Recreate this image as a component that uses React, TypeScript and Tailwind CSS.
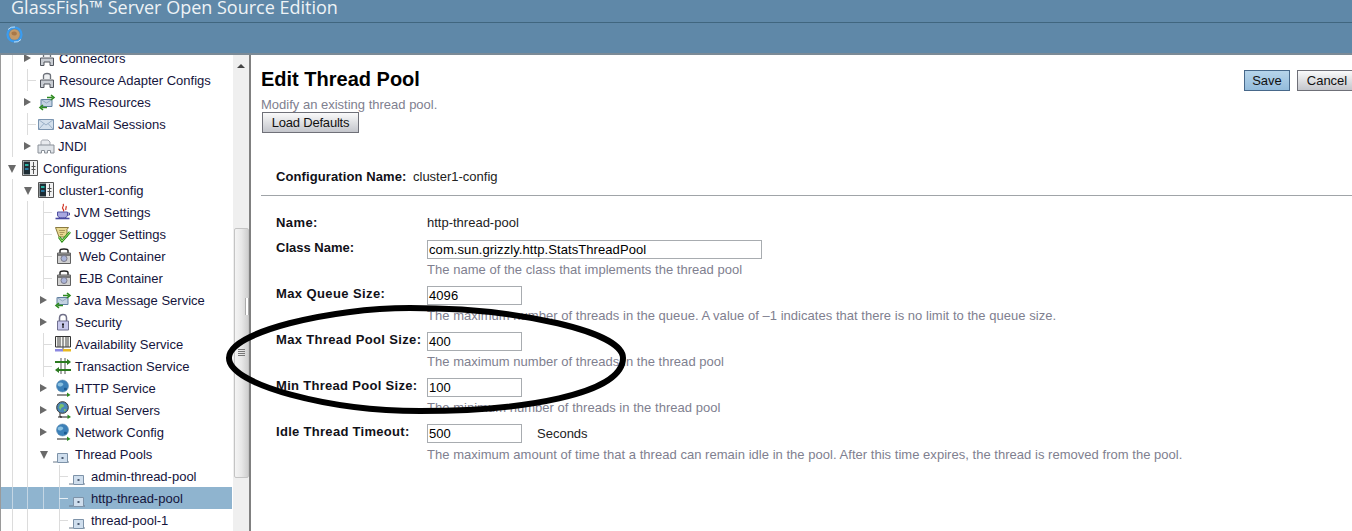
import React from "react";

type IconName = "connector" | "jms" | "mail" | "jndi" | "config" | "jvm" | "logger" | "container" | "lock" | "avail" | "tx" | "globe" | "vs" | "pool";

function Icon({ name }: { name: IconName }) {
  const c = "w-[18px] h-[18px] shrink-0 block";
  switch (name) {
    case "connector":
      return (
        <svg viewBox="0 0 18 18" className={c}>
          <path d="M5.500 8V4.500C5.500 3.500 7 2.500 9 2.500s3.500 1 3.500 2V8" fill="#eef0f2" stroke="#6c7078" strokeWidth="1.300" />
          <path d="M2.500 9h13v7.500h-3.500v-3.500H6v3.500H2.500z" fill="#c8ccd2" stroke="#50545c" strokeWidth="1" />
        </svg>
      );
    case "jms":
      return (
        <svg viewBox="0 0 18 18" className={c}>
          <path d="M3 6.500h11v7H3z" fill="#c4d2e2" stroke="#6080a0" strokeWidth="1" />
          <path d="M3 6.500l5.500 3.500L14 6.500" fill="none" stroke="#8aa0b8" strokeWidth=".8" />
          <path d="M9 4.500h5.500M13 2l3 2.500L13 7" fill="none" stroke="#2e8a20" strokeWidth="1.600" />
          <path d="M9 14.500H3.500M5 12l-3 2.500L5 17" fill="none" stroke="#2e8a20" strokeWidth="1.600" />
        </svg>
      );
    case "mail":
      return (
        <svg viewBox="0 0 18 18" className={c}>
          <path d="M1.500 4.500h15v10h-15z" fill="#d4e0ec" stroke="#7a94b0" strokeWidth="1" />
          <path d="M1.500 4.500L9 10l7.500-5.500M1.500 14.500L7 8.500M16.500 14.500L11 8.500" fill="none" stroke="#8aa2bc" strokeWidth=".8" />
        </svg>
      );
    case "jndi":
      return (
        <svg viewBox="0 0 18 18" className={c}>
          <path d="M4 8V5c0-1.200 1-2 2-2h5l2 2v3" fill="#e8eaee" stroke="#a4a8b0" strokeWidth="1" />
          <path d="M1 8h16v8h-3.500v-2.500h-3V16h-3v-2.500h-3V16H1z" fill="#dfe3e8" stroke="#8a9098" strokeWidth="1" />
        </svg>
      );
    case "config":
      return (
        <svg viewBox="0 0 18 18" className={c}>
          <path d="M1.500 1.500h15v15h-15z" fill="#f2f2f2" stroke="#555" strokeWidth="1" />
          <path d="M2.500 2.500h6.500v13H2.500z" fill="#1d2c34" />
          <path d="M4 5h3.500v2H4z" fill="#28b0a0" />
          <path d="M4 9h3.500v2H4z" fill="#2878a0" />
          <path d="M12.500 3v12M10.500 7.500h4M10.500 10.500h4" fill="none" stroke="#555" strokeWidth="1" />
        </svg>
      );
    case "jvm":
      return (
        <svg viewBox="0 0 18 18" className={c}>
          <path d="M9 1c2 2-2 3 0 5 .8 .8 1 1.500 .5 2.500M12 3c1 1.500-1 2.500 0 4" fill="none" stroke="#d03020" strokeWidth="1.200" />
          <path d="M3.500 9h10v3c0 2-2 3-5 3s-5-1-5-3z" fill="#a8a8e0" stroke="#5050a0" strokeWidth="1" />
          <path d="M13.500 10h2v2h-2" fill="none" stroke="#5050a0" strokeWidth="1" />
          <path d="M1.500 15.500h14" stroke="#4848a0" strokeWidth="1.600" />
        </svg>
      );
    case "logger":
      return (
        <svg viewBox="0 0 18 18" className={c}>
          <path d="M1.500 2.500h13l-1.500 2v7.500H5z" fill="#e8d890" stroke="#8a7a40" strokeWidth="1" />
          <path d="M5 5.500h6M5.500 7.500h5M6 9.500h3" stroke="#9a8a50" strokeWidth=".8" />
          <path d="M5 12l3 4 8-9" fill="none" stroke="#2a8a18" strokeWidth="2.600" />
          <path d="M5 12l3 4 8-9" fill="none" stroke="#a8e878" strokeWidth="1" />
        </svg>
      );
    case "container":
      return (
        <svg viewBox="0 0 18 18" className={c}>
          <path d="M5 6V3.500C5 2.500 6.500 2 9 2s4 .5 4 1.500V6" fill="none" stroke="#222" strokeWidth="1.400" />
          <path d="M2.500 6h13v10.500h-13z" fill="#d0d0d0" stroke="#606060" strokeWidth="1" />
          <path d="M3 6.500h12v2.500H3z" fill="#777" />
          <circle cx="9" cy="11.500" r="3" fill="#aab4d8" stroke="#7a7a8a" strokeWidth="1" />
        </svg>
      );
    case "lock":
      return (
        <svg viewBox="0 0 18 18" className={c}>
          <path d="M5.500 8V5c0-2 1.500-3.500 3.500-3.500S12.500 3 12.500 5v3" fill="none" stroke="#707088" strokeWidth="1.500" />
          <path d="M3.500 8h11v9h-11z" fill="#c8c8ec" stroke="#707090" strokeWidth="1" />
          <path d="M8 10.500h2v1l-.4 .8V15H8.400v-2.700L8 11.500z" fill="#111" />
        </svg>
      );
    case "avail":
      return (
        <svg viewBox="0 0 18 18" className={c}>
          <path d="M1.500 1.500h15v10.500h-15z" fill="#f6f6f2" stroke="#333" strokeWidth="1" />
          <path d="M4 2v10M6 2v10M9 2v10M12 2v10M14 2v10" stroke="#444" strokeWidth="1" />
          <path d="M9 12v2" stroke="#555" strokeWidth="1" />
          <path d="M1 14h8v2.500H1z" fill="#8c88e0" />
          <path d="M9 14h8v2.500H9z" fill="#e8b820" />
        </svg>
      );
    case "tx":
      return (
        <svg viewBox="0 0 18 18" className={c}>
          <path d="M7 1v16M11 1v16" stroke="#555" strokeWidth="1" />
          <path d="M1 5h13" stroke="#2c7a20" strokeWidth="2" />
          <path d="M13 2l4 3-4 3z" fill="#2c7a20" />
          <path d="M17 13H4" stroke="#2c7a20" strokeWidth="2" />
          <path d="M5 10l-4 3 4 3z" fill="#2c7a20" />
        </svg>
      );
    case "globe":
      return (
        <svg viewBox="0 0 18 18" className={c}>
          <circle cx="8.500" cy="7" r="6" fill="#3c80b8" stroke="#5a8ab0" strokeWidth=".6" />
          <path d="M4 4.500c2-1.500 4-1 5 0s-1 3-3 3-3-1.500-2-3z" fill="#8ac0e0" />
          <path d="M10 9c1.500-.5 3 0 3 1s-1.500 1.500-3 1z" fill="#1c5a90" />
          <path d="M3 16h11" stroke="#222" strokeWidth="1" />
          <path d="M13 13.500l3.500 2.500-3.500 2z" fill="#2c8a20" />
        </svg>
      );
    case "vs":
      return (
        <svg viewBox="0 0 18 18" className={c}>
          <circle cx="8.500" cy="6.500" r="5.800" fill="#4a88b8" stroke="#333" strokeWidth="1" />
          <path d="M6 3.500c2-1 4 0 4 1.500s-3 1-3 3-1.500 0-2-1.500z" fill="#78c070" />
          <path d="M10 8c1.500 0 2.500 .5 2 1.500l-2 1z" fill="#78c070" />
          <path d="M6 12v4h8" fill="none" stroke="#222" strokeWidth="1" />
          <path d="M4 16h4" stroke="#222" strokeWidth="1" />
          <path d="M13.500 13.500l3.500 2.500-3.500 2z" fill="#2c8a20" />
        </svg>
      );
    case "pool":
      return (
        <svg viewBox="0 0 18 18" className={c}>
          <path d="M0 17h4M14 17h2" stroke="#6a7a8c" strokeWidth="1" />
          <path d="M4.500 8.500h10v9h-10z" fill="#cfdeed" stroke="#7d92a8" strokeWidth="1" />
          <path d="M8.500 12h2v2h-2z" fill="#4a5a70" />
        </svg>
      );
  }
}

type Node = {
  t: string;
  i: IconName;
  pad: string;
  gap: string;
  exp?: "open" | "closed";
  expX?: string;
  v: string[];
  stub?: string;
  sel?: boolean;
};

const L = "left-[11px]";
const M = "left-[26px]";
const N = "left-[42px]";
const P = "left-[58px]";

const nodes: Node[] = [
  { t: "Connectors", i: "connector", pad: "pl-[37px]", gap: "ml-[3px]", exp: "closed", expX: "left-[23px]", v: [L] },
  { t: "Resource Adapter Configs", i: "connector", pad: "pl-[37px]", gap: "ml-[3px]", v: [L, M], stub: "left-[26px]" },
  { t: "JMS Resources", i: "jms", pad: "pl-[37px]", gap: "ml-[3px]", exp: "closed", expX: "left-[23px]", v: [L] },
  { t: "JavaMail Sessions", i: "mail", pad: "pl-[36px]", gap: "ml-[3px]", v: [L, M], stub: "left-[26px]" },
  { t: "JNDI", i: "jndi", pad: "pl-[36px]", gap: "ml-[3px]", exp: "closed", expX: "left-[23px]", v: [L] },
  { t: "Configurations", i: "config", pad: "pl-[20px]", gap: "ml-[4px]", exp: "open", expX: "left-[7px]", v: [] },
  { t: "cluster1-config", i: "config", pad: "pl-[36px]", gap: "ml-[4px]", exp: "open", expX: "left-[23px]", v: [L] },
  { t: "JVM Settings", i: "jvm", pad: "pl-[53px]", gap: "ml-[2px]", v: [L, M, N], stub: "left-[42px]" },
  { t: "Logger Settings", i: "logger", pad: "pl-[53px]", gap: "ml-[3px]", v: [L, M, N], stub: "left-[42px]" },
  { t: "Web Container", i: "container", pad: "pl-[54px]", gap: "ml-[6px]", v: [L, M, N], stub: "left-[42px]" },
  { t: "EJB Container", i: "container", pad: "pl-[54px]", gap: "ml-[6px]", v: [L, M, N], stub: "left-[42px]" },
  { t: "Java Message Service", i: "jms", pad: "pl-[53px]", gap: "ml-[2px]", exp: "closed", expX: "left-[39px]", v: [L, M] },
  { t: "Security", i: "lock", pad: "pl-[53px]", gap: "ml-[3px]", exp: "closed", expX: "left-[39px]", v: [L, M] },
  { t: "Availability Service", i: "avail", pad: "pl-[53px]", gap: "ml-[3px]", v: [L, M, N], stub: "left-[42px]" },
  { t: "Transaction Service", i: "tx", pad: "pl-[53px]", gap: "ml-[3px]", v: [L, M, N], stub: "left-[42px]" },
  { t: "HTTP Service", i: "globe", pad: "pl-[53px]", gap: "ml-[3px]", exp: "closed", expX: "left-[39px]", v: [L, M] },
  { t: "Virtual Servers", i: "vs", pad: "pl-[53px]", gap: "ml-[3px]", exp: "closed", expX: "left-[39px]", v: [L, M] },
  { t: "Network Config", i: "globe", pad: "pl-[53px]", gap: "ml-[3px]", exp: "closed", expX: "left-[39px]", v: [L, M] },
  { t: "Thread Pools", i: "pool", pad: "pl-[52px]", gap: "ml-[4px]", exp: "open", expX: "left-[39px]", v: [L, M] },
  { t: "admin-thread-pool", i: "pool", pad: "pl-[68px]", gap: "ml-[4px]", v: [L, M, P], stub: "left-[58px]" },
  { t: "http-thread-pool", i: "pool", pad: "pl-[68px]", gap: "ml-[4px]", v: [L, M, N, P], stub: "left-[58px]", sel: true },
  { t: "thread-pool-1", i: "pool", pad: "pl-[68px]", gap: "ml-[4px]", v: [L, M, P], stub: "left-[58px]" },
];

function Row({ n }: { n: Node }) {
  return (
    <div className={`relative h-[22px] w-[231px] flex items-center ${n.pad} ${n.sel ? "bg-[#8fb4cf]" : ""}`}>
      {n.v.map((x) => (
        <span key={x} className={`absolute top-0 bottom-0 w-px ${x} ${n.sel ? "bg-[#c4d6e4]" : "bg-[#dcdcdc]"}`} />
      ))}
      {n.stub && <span className={`absolute top-[11px] h-px w-[9px] ${n.stub} ${n.sel ? "bg-[#e6eef4]" : "bg-[#dcdcdc]"}`} />}
      {n.exp === "closed" && (
        <span className={`absolute top-[7px] ${n.expX} w-0 h-0 border-y-[4px] border-y-transparent border-l-[7px] border-l-[#6a6a6a]`} />
      )}
      {n.exp === "open" && (
        <span className={`absolute top-[8px] ${n.expX} w-0 h-0 border-x-[4px] border-x-transparent border-t-[8px] border-t-[#6a6a6a]`} />
      )}
      <Icon name={n.i} />
      <span className={`${n.gap} pt-[2px] whitespace-nowrap text-[13px] text-[#14143c]`}>{n.t}</span>
    </div>
  );
}

function Field({ label, value, help, width = "w-[95px]", suffix, track = "tracking-[0.3px]" }: { label: string; value: string; help: string; width?: string; suffix?: string; track?: string }) {
  return (
    <div className="flex h-[46px]">
      <div className={`w-[151px] font-bold text-[13px] ${track} leading-[16px] text-[#111118] whitespace-nowrap`}>{label}</div>
      <div className="flex flex-col">
        <div className="flex items-center">
          <div className={`${width} h-[19px] border border-[#a8acb0] bg-white flex items-center pl-[1px] text-[13px] tracking-[0.08px] leading-[16px] text-black overflow-hidden`}>{value}</div>
          {suffix && <span className="ml-[15px] text-[13px] text-[#222]">{suffix}</span>}
        </div>
        <div className="mt-[2px] whitespace-nowrap text-[13px] tracking-[0.03px] leading-[18px] text-[#80808f]">{help}</div>
      </div>
    </div>
  );
}

export default function App() {
  return (
    <div className="relative w-[1352px] h-[531px] overflow-hidden flex flex-col bg-white font-['Liberation_Sans',Arial,sans-serif]">
      <div className="h-[23px] bg-[#5f88a8] overflow-hidden pl-[11px] border-b border-[#40667f] shrink-0">
        <div className="-mt-[6px] text-[18px] leading-[26px] font-medium text-[#eef3f6] font-['Open_Sans',sans-serif] whitespace-nowrap">GlassFish™ Server Open Source Edition</div>
      </div>
      <div className="h-[32px] bg-[#5f88a8] border-b-[2px] border-[#7b8a96] shrink-0 pl-[6px] pt-[3px]">
        <svg viewBox="0 0 17 17" className="w-[17px] h-[17px] block">
          <circle cx="8.500" cy="8.500" r="7" fill="none" stroke="#3a9cf0" strokeWidth="2.200" />
          <path d="M2 3.500A7.500 7.500 0 0 1 9 1" fill="none" stroke="#bfe0fa" strokeWidth="1" />
          <path d="M15 13.500A7.500 7.500 0 0 1 8 16" fill="none" stroke="#bfe0fa" strokeWidth="1" />
          <circle cx="8.500" cy="8.500" r="5.200" fill="#c49a68" />
          <path d="M5.500 6.500c1.500-1.500 4-1 5 0s0 3-2 3-3.500-1-3-3z" fill="#a87848" />
        </svg>
      </div>
      <div className="flex flex-1 min-h-0">
        <div className="w-[249px] shrink-0 flex border-l border-[#9a9a9a] overflow-hidden">
          <div className="w-[232px] -mt-[8px] shrink-0">
            {nodes.map((n) => (
              <Row key={n.t} n={n} />
            ))}
          </div>
          <div className="relative w-[16px] bg-[#efefef] flex flex-col items-center shrink-0">
            <span className="mt-[9px] w-0 h-0 border-x-[4px] border-x-transparent border-b-[4px] border-b-[#444]" />
            <div className="mt-[160px] w-[15px] h-[250px] rounded-[2px] border border-[#c4c4c4] bg-gradient-to-r from-[#f4f4f4] via-[#e8e8e8] to-[#cfcfcf] flex flex-col items-center">
              <div className="mt-[120px] w-[7px] flex flex-col gap-px">
                <span className="h-px bg-[#777]" />
                <span className="h-px bg-[#777]" />
                <span className="h-px bg-[#777]" />
                <span className="h-px bg-[#777]" />
              </div>
            </div>
            <div className="absolute left-[12px] top-[243px] w-[4px] h-[17px] border-x border-[#aaa] bg-white" />
          </div>
        </div>
        <div className="flex-1 min-w-0 border-l-[2px] border-[#808080] pl-[10px]">
          <div className="flex items-start justify-between pt-[11px]">
            <div className="text-[20px] leading-[26px] font-bold text-black">Edit Thread Pool</div>
            <div className="flex gap-[7px] pt-[4px] -mr-[5px]">
              <button className="h-[21px] w-[46px] border border-[#47688a] bg-gradient-to-b from-[#b6d4ea] to-[#94bcdc] text-[13px] leading-[17px] text-[#111]">Save</button>
              <button className="h-[21px] w-[60px] border border-[#6f7078] bg-gradient-to-b from-[#fafafa] to-[#c4c6cc] text-[13px] leading-[17px] text-[#111]">Cancel</button>
            </div>
          </div>
          <div className="mt-[4px] text-[13px] leading-[17px] text-[#80808f]">Modify an existing thread pool.</div>
          <button className="ml-px -mt-[1px] block h-[21px] w-[97px] border border-[#6f7078] bg-gradient-to-b from-[#fafafa] to-[#c4c6cc] text-[13px] tracking-[-0.2px] leading-[17px] text-[#111]">Load Defaults</button>
          <div className="mt-[35px] pb-[9px] pl-[15px] flex items-center border-b border-[#a0a4a8] h-[28px]">
            <span className="font-bold text-[13px] tracking-[0.1px] w-[137px] text-[#111118] whitespace-nowrap">Configuration Name:</span>
            <span className="text-[13px] text-[#222]">cluster1-config</span>
          </div>
          <div className="pl-[15px] pt-[17px]">
            <div className="flex h-[27px] text-[13px]">
              <div className="w-[151px] font-bold tracking-[0.4px] text-[#111118]">Name:</div>
              <div className="text-[#222]">http-thread-pool</div>
            </div>
            <Field label="Class Name:" value="com.sun.grizzly.http.StatsThreadPool" help="The name of the class that implements the thread pool" width="w-[335px]" track="tracking-[0px]" />
            <Field label="Max Queue Size:" value="4096" help="The maximum number of threads in the queue. A value of –1 indicates that there is no limit to the queue size." track="tracking-[0.4px]" />
            <Field label="Max Thread Pool Size:" value="400" help="The maximum number of threads in the thread pool" track="tracking-[0.35px]" />
            <Field label="Min Thread Pool Size:" value="100" help="The minimum number of threads in the thread pool" />
            <Field label="Idle Thread Timeout:" value="500" help="The maximum amount of time that a thread can remain idle in the pool. After this time expires, the thread is removed from the pool." suffix="Seconds" />
          </div>
        </div>
      </div>
      <svg viewBox="0 0 1352 531" className="absolute left-0 top-0 w-[1352px] h-[531px] pointer-events-none">
        <path
          d="M410 308C330 308 229 332 229 358C229 385 330 411 420 411C520 411 623 395 623 358C623 332 520 308 410 308Z"
          fill="none"
          stroke="#000"
          strokeWidth="6"
        />
      </svg>
    </div>
  );
}
